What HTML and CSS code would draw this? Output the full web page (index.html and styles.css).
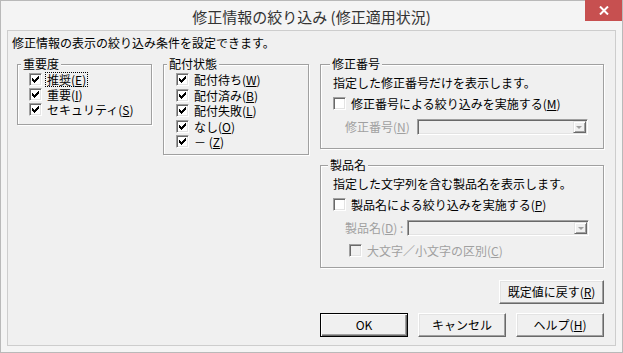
FILE: index.html
```html
<!DOCTYPE html>
<html lang="ja">
<head>
<meta charset="utf-8">
<title>修正情報の絞り込み</title>
<link rel="stylesheet" href="styles.css">
</head>
<body>
<div class="window">
  <div class="titlebar">
    <span class="title">修正情報の絞り込み (修正適用状況)</span>
    <div class="close"><svg width="10" height="9" viewBox="0 0 10 9"><path d="M1 0.5L9 8.5M9 0.5L1 8.5" stroke="#fff" stroke-width="2"/></svg></div>
  </div>
  <div class="client">
    <div class="desc">修正情報の表示の絞り込み条件を設定できます。</div>
    <div class="main">
      <div class="group g-imp">
        <div class="legend">重要度</div>
        <div class="rows">
          <div class="chk"><span class="box"><svg class="tick" width="7" height="7" viewBox="0 0 7 7"><path d="M0 2h1v3H0zM1 3h1v3H1zM2 4h1v3H2zM3 3h1v3H3zM4 2h1v3H4zM5 1h1v3H5zM6 0h1v3H6z"/></svg></span><span class="lbl focus">推奨(<u>E</u>)</span></div>
          <div class="chk"><span class="box"><svg class="tick" width="7" height="7" viewBox="0 0 7 7"><path d="M0 2h1v3H0zM1 3h1v3H1zM2 4h1v3H2zM3 3h1v3H3zM4 2h1v3H4zM5 1h1v3H5zM6 0h1v3H6z"/></svg></span><span class="lbl">重要(<u>I</u>)</span></div>
          <div class="chk"><span class="box"><svg class="tick" width="7" height="7" viewBox="0 0 7 7"><path d="M0 2h1v3H0zM1 3h1v3H1zM2 4h1v3H2zM3 3h1v3H3zM4 2h1v3H4zM5 1h1v3H5zM6 0h1v3H6z"/></svg></span><span class="lbl">セキュリティ(<u>S</u>)</span></div>
        </div>
      </div>
      <div class="group g-dist">
        <div class="legend">配付状態</div>
        <div class="rows">
          <div class="chk"><span class="box"><svg class="tick" width="7" height="7" viewBox="0 0 7 7"><path d="M0 2h1v3H0zM1 3h1v3H1zM2 4h1v3H2zM3 3h1v3H3zM4 2h1v3H4zM5 1h1v3H5zM6 0h1v3H6z"/></svg></span><span class="lbl">配付待ち(<u>W</u>)</span></div>
          <div class="chk"><span class="box"><svg class="tick" width="7" height="7" viewBox="0 0 7 7"><path d="M0 2h1v3H0zM1 3h1v3H1zM2 4h1v3H2zM3 3h1v3H3zM4 2h1v3H4zM5 1h1v3H5zM6 0h1v3H6z"/></svg></span><span class="lbl">配付済み(<u>B</u>)</span></div>
          <div class="chk"><span class="box"><svg class="tick" width="7" height="7" viewBox="0 0 7 7"><path d="M0 2h1v3H0zM1 3h1v3H1zM2 4h1v3H2zM3 3h1v3H3zM4 2h1v3H4zM5 1h1v3H5zM6 0h1v3H6z"/></svg></span><span class="lbl">配付失敗(<u>L</u>)</span></div>
          <div class="chk"><span class="box"><svg class="tick" width="7" height="7" viewBox="0 0 7 7"><path d="M0 2h1v3H0zM1 3h1v3H1zM2 4h1v3H2zM3 3h1v3H3zM4 2h1v3H4zM5 1h1v3H5zM6 0h1v3H6z"/></svg></span><span class="lbl">なし(<u>O</u>)</span></div>
          <div class="chk"><span class="box"><svg class="tick" width="7" height="7" viewBox="0 0 7 7"><path d="M0 2h1v3H0zM1 3h1v3H1zM2 4h1v3H2zM3 3h1v3H3zM4 2h1v3H4zM5 1h1v3H5zM6 0h1v3H6z"/></svg></span><span class="lbl">－ (<u>Z</u>)</span></div>
        </div>
      </div>
      <div class="right">
        <div class="group g-fix">
          <div class="legend">修正番号</div>
          <div class="note">指定した修正番号だけを表示します。</div>
          <div class="chk"><span class="box"></span><span class="lbl">修正番号による絞り込みを実施する(<u>M</u>)</span></div>
          <div class="field">
            <span class="flabel">修正番号(<u>N</u>)</span>
            <div class="combo c-fix"><span class="dd"><span class="tri"></span></span></div>
          </div>
        </div>
        <div class="group g-prod">
          <div class="legend">製品名</div>
          <div class="note">指定した文字列を含む製品名を表示します。</div>
          <div class="chk"><span class="box"></span><span class="lbl">製品名による絞り込みを実施する(<u>P</u>)</span></div>
          <div class="field">
            <span class="flabel">製品名(<u>D</u>) :</span>
            <div class="combo c-prod"><span class="dd"><span class="tri"></span></span></div>
          </div>
          <div class="chk sub disabled"><span class="box off"></span><span class="lbl">大文字／小文字の区別(<u>C</u>)</span></div>
        </div>
        <div class="btnrow top"><button class="btn wide">既定値に戻す(<u>R</u>)</button></div>
        <div class="btnrow">
          <button class="btn default">OK</button>
          <button class="btn">キャンセル</button>
          <button class="btn">ヘルプ(<u>H</u>)</button>
        </div>
      </div>
    </div>
  </div>
</div>
</body>
</html>
```
FILE: styles.css
```css
* { box-sizing: border-box; }
html, body { margin: 0; padding: 0; background: #f4f4f4; }
body {
  font-family: "Noto Sans CJK JP", "Noto Sans", sans-serif;
  font-size: 12px;
  color: #000;
}
u { text-decoration: underline; text-underline-offset: 1px; }

.window {
  width: 623px;
  height: 353px;
  border: 1px solid #b9b9b9;
  background: #f4f4f4;
  padding: 0 6px 6px 6px;
  display: flex;
  flex-direction: column;
  position: relative;
}
.titlebar {
  height: 29px;
  display: flex;
  justify-content: center;
  align-items: center;
  padding-top: 2px;
}
.title {
  font-size: 15px;
  line-height: 18px;
  color: #333;
}
.close {
  position: absolute;
  top: -1px;
  right: 0;
  width: 37px;
  height: 21px;
  background: #c75050;
  display: flex;
  align-items: center;
  justify-content: center;
}
.close svg { display: block; }

.client {
  flex: 1;
  border: 1px solid #cdcdcd;
  background: #f0f0f0;
  display: flex;
  flex-direction: column;
}
.desc {
  margin-top: 5px;
  padding-left: 4px;
  height: 14px;
  line-height: 14px;
}
.main {
  display: flex;
  align-items: flex-start;
  margin-top: 14px;
  padding-left: 9px;
}

.group {
  border: 1px solid #a0a0a0;
  box-shadow: inset 1px 1px #fff, 1px 1px #fff;
  display: flex;
  flex-direction: column;
  align-items: flex-start;
}
.legend {
  margin: -8px 0 0 3px;
  padding: 0 2px;
  height: 14px;
  line-height: 14px;
  background: #f0f0f0;
}
.g-imp { width: 135px; height: 61px; }
.g-dist { width: 146px; height: 91px; margin-left: 11px; }
.rows { margin-top: 1px; padding-left: 11px; display: flex; flex-direction: column; }
.g-dist .rows { padding-left: 12px; }
.g-dist .chk { height: 15.5px; }

.chk {
  height: 15px;
  display: flex;
  align-items: center;
  white-space: nowrap;
}
.box {
  width: 13px;
  height: 13px;
  flex: none;
  border: 1px solid;
  border-color: #a0a0a0 #fff #fff #a0a0a0;
  box-shadow: inset 1px 1px #696969, inset -1px -1px #e3e3e3;
  background: #fff;
  display: flex;
  align-items: center;
  justify-content: center;
}
.box.off { background: #f0f0f0; }
.tick { display: block; fill: #000; shape-rendering: crispEdges; }
.lbl {
  margin-left: 4px;
  padding: 0 1px;
  line-height: 13px;
}
.lbl.focus { outline: 1px dotted #000; outline-offset: 0; }

.right {
  margin-left: 11px;
  width: 284px;
  display: flex;
  flex-direction: column;
}
.g-fix { height: 85px; padding-left: 12px; }
.g-prod { height: 103px; margin-top: 16px; padding-left: 12px; }
.right .legend { margin-left: 1px; margin-left: -4px; }
.g-fix .legend { margin-left: -3px; }
.g-prod .legend { margin-left: -5px; }
.note { margin-top: 5px; height: 14px; line-height: 14px; }
.right .chk { margin-top: 6px; height: 14px; }
.field {
  margin-top: 9px;
  margin-left: 12px;
  height: 16px;
  display: flex;
  align-items: center;
}
.flabel { color: #a0a0a0; line-height: 14px; white-space: nowrap; }
.combo {
  height: 16px;
  border: 1px solid;
  border-color: #a0a0a0 #fff #fff #a0a0a0;
  box-shadow: inset 1px 1px #696969, inset -1px -1px #e3e3e3;
  background: #f0f0f0;
  padding: 1px;
  display: flex;
  justify-content: flex-end;
}
.c-fix { width: 171px; margin-left: 7px; }
.c-prod { width: 182px; margin-left: 4px; }
.dd {
  width: 13px;
  height: 12px;
  border: 1px solid;
  border-color: #e3e3e3 #696969 #696969 #e3e3e3;
  box-shadow: inset 1px 1px #fff, inset -1px -1px #a0a0a0;
  background: #f0f0f0;
  display: flex;
  align-items: center;
  justify-content: center;
}
.tri {
  width: 0;
  height: 0;
  border-left: 3px solid transparent;
  border-right: 3px solid transparent;
  border-top: 3px solid #a0a0a0;
}
.chk.sub { margin-top: 7px; margin-left: 16px; }
.chk.disabled .lbl { color: #a0a0a0; }

.btnrow {
  display: flex;
  justify-content: space-between;
  margin-top: 9px;
}
.btnrow.top { justify-content: flex-end; margin-top: 12px; }
.btn {
  width: 88px;
  height: 24px;
  padding: 0;
  font-family: inherit;
  font-size: 12px;
  color: #000;
  background: #f0f0f0;
  border: 1px solid;
  border-color: #fff #696969 #696969 #fff;
  box-shadow: inset -1px -1px #a0a0a0, inset 1px 1px #e3e3e3;
  line-height: 14px;
}
.btn.wide { width: 105px; }
.btn.default {
  border-color: #000;
  box-shadow: inset 1px 1px #fff, inset -1px -1px #696969, inset -2px -2px #a0a0a0;
}
```
